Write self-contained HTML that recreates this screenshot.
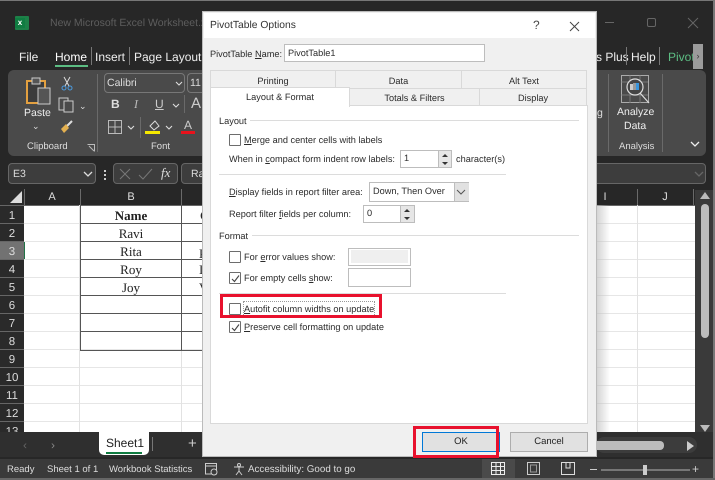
<!DOCTYPE html>
<html><head><meta charset="utf-8">
<style>
html,body{margin:0;padding:0;background:#2a2a2a;}
#p{position:relative;width:715px;height:480px;overflow:hidden;background:#272727;font-family:"Liberation Sans",sans-serif;color:#e6e6e6;font-size:11px;text-rendering:geometricPrecision;}
.a{position:absolute;white-space:nowrap;}
.t{position:absolute;white-space:nowrap;line-height:14px;}
.d{color:#2b2b2b;font-size:9.2px;}
.d u{text-decoration-thickness:1px;}
.cb{position:absolute;width:10px;height:10px;border:1px solid #6d6d6d;background:#fff;border-radius:1px;}
.inp{position:absolute;background:#fff;border:1px solid #bdbdbd;box-sizing:border-box;color:#2b2b2b;font-size:9.2px;}
.rh{position:absolute;left:0;width:24px;height:17px;background:#2a2a2a;border-bottom:1px solid #666;color:#ddd;font-size:11.5px;text-align:center;line-height:20px;overflow:hidden;}
.gh{position:absolute;left:24px;width:671px;height:1px;background:#e6e6e6;}
.gv{position:absolute;top:205px;width:1px;height:227px;background:#e2e2e2;}
.bl{position:absolute;background:#555;}
.c{position:absolute;left:80px;width:102px;text-align:center;font-family:"Liberation Serif",serif;font-size:13px;color:#222;line-height:18px;}
.ch{position:absolute;top:190px;text-align:center;color:#ddd;font-size:11px;line-height:15px;}
.sep{position:absolute;width:1px;background:#6a6a6a;}
.tab{position:absolute;box-sizing:border-box;background:#f0f0f0;border:1px solid #d9d9d9;color:#2b2b2b;font-size:9.2px;text-align:center;line-height:17px;}
.hl{position:absolute;background:#dcdcdc;height:1px;}
</style></head><body><div id="p">

<!-- outer edge -->
<div class="a" style="left:0;top:0;width:715px;height:1px;background:#777"></div>
<div class="a" style="left:713px;top:0;width:2px;height:480px;background:#777"></div>
<div class="a" style="left:0;top:478px;width:715px;height:2px;background:#666"></div>

<!-- title bar -->
<div class="a" style="left:15px;top:16px;width:14px;height:14px;background:#1d8048;border-radius:1px"></div>
<div class="a" style="left:15px;top:18px;width:10px;height:10px;background:#107c41;color:#fff;font-size:8px;font-weight:bold;text-align:center;line-height:10px">x</div>
<div class="t" style="left:50px;top:16px;font-size:10.5px;color:#5e5e5e;">New Microsoft Excel Worksheet.xl</div>
<div class="a" style="left:605px;top:22px;width:9px;height:1px;background:#666"></div>
<div class="a" style="left:647px;top:18px;width:7px;height:7px;border:1.5px solid #666;border-radius:2px"></div>
<svg class="a" style="left:687px;top:17px" width="12" height="12"><path d="M1 1L11 11M11 1L1 11" stroke="#666" stroke-width="1"/></svg>

<!-- tabs -->
<div class="t" style="left:19px;top:50px;font-size:12px;color:#eee">File</div>
<div class="t" style="left:55px;top:50px;font-size:12px;color:#fff;font-weight:500">Home</div>
<div class="a" style="left:55px;top:65px;width:33px;height:2px;background:#5cbd83"></div>
<div class="sep" style="left:91px;top:47px;height:18px;background:#777"></div>
<div class="t" style="left:95px;top:50px;font-size:12px;color:#eee">Insert</div>
<div class="sep" style="left:129px;top:47px;height:18px;background:#777"></div>
<div class="t" style="left:134px;top:50px;font-size:12px;color:#eee">Page Layout</div>
<div class="t" style="left:596px;top:50px;font-size:12px;color:#eee">s Plus</div>
<div class="sep" style="left:626px;top:47px;height:18px;background:#777"></div>
<div class="t" style="left:631px;top:50px;font-size:12px;color:#eee">Help</div>
<div class="sep" style="left:659px;top:47px;height:18px;background:#777"></div>
<div class="t" style="left:668px;top:50px;font-size:12px;color:#5cbd83;width:25px;overflow:hidden">Pivot</div>
<div class="a" style="left:693px;top:44px;width:10px;height:25px;background:#9b9b9b;color:#333;font-size:9px;text-align:center;line-height:25px">›</div>

<!-- ribbon -->
<div class="a" style="left:8px;top:70px;width:698px;height:86px;background:#4a4a4a;border-radius:6px"></div>
<svg class="a" style="left:24px;top:76px" width="30" height="32"><rect x="3" y="5" width="18" height="22" fill="#3c3c3c" stroke="#e3a040" stroke-width="2"/><rect x="8" y="2" width="8" height="6" fill="#555" stroke="#ccc"/><rect x="14" y="12" width="12" height="16" fill="#555" stroke="#ccc"/></svg>
<div class="t" style="left:24px;top:106px;font-size:10.5px;color:#eee">Paste</div>
<div class="t" style="left:32px;top:119px;font-size:9px;color:#ddd">⌄</div>
<svg class="a" style="left:60px;top:76px" width="14" height="15"><path d="M4 1L9 10M10 1L5 10" stroke="#ddd" fill="none"/><circle cx="4" cy="12" r="2" stroke="#4a9be0" fill="none"/><circle cx="10" cy="12" r="2" stroke="#4a9be0" fill="none"/></svg>
<svg class="a" style="left:58px;top:97px" width="18" height="16"><rect x="1" y="1" width="9" height="12" fill="none" stroke="#ccc"/><rect x="6" y="4" width="9" height="11" fill="#4a4a4a" stroke="#ccc"/></svg>
<div class="t" style="left:79px;top:99px;font-size:9px;color:#ddd">⌄</div>
<svg class="a" style="left:59px;top:120px" width="15" height="14"><path d="M13 1L8 6" stroke="#ddd" stroke-width="2"/><path d="M2 9L7 4L10 8L5 13Z" fill="#e3b050"/></svg>
<div class="t" style="left:27px;top:140px;font-size:9.5px;color:#ddd">Clipboard</div>
<svg class="a" style="left:87px;top:144px" width="8" height="8"><path d="M.5 .5H7.500V7.500" fill="none" stroke="#bbb"/><path d="M2 2L7 7" stroke="#bbb"/></svg>
<div class="sep" style="left:97px;top:74px;height:78px"></div>

<div class="a" style="left:104px;top:73px;width:81px;height:20px;border:1px solid #777;border-radius:4px;box-sizing:border-box;background:#4a4a4a"></div>
<div class="t" style="left:107px;top:76px;font-size:10.5px;color:#ddd">Calibri</div>
<svg class="a" style="left:175px;top:81px" width="8" height="5"><path d="M1 1L4 4L7 1" fill="none" stroke="#ddd" stroke-width="1.100"/></svg>
<div class="a" style="left:187px;top:73px;width:17px;height:20px;border:1px solid #777;border-right:0;border-radius:4px 0 0 4px;box-sizing:border-box"></div>
<div class="t" style="left:190px;top:76px;font-size:10.5px;color:#ddd">11</div>
<div class="t" style="left:111px;top:97px;font-size:12px;color:#ddd;font-weight:bold">B</div>
<div class="t" style="left:134px;top:97px;font-size:12px;color:#bbb;font-style:italic;font-family:'Liberation Serif',serif">I</div>
<div class="t" style="left:155px;top:97px;font-size:12px;color:#ccc;text-decoration:underline">U</div>
<svg class="a" style="left:172px;top:103px" width="8" height="5"><path d="M1 1L4 4L7 1" fill="none" stroke="#ddd" stroke-width="1.100"/></svg>
<div class="sep" style="left:184px;top:95px;height:18px"></div>
<div class="t" style="left:191px;top:97px;font-size:15px;color:#ccc">A</div>
<svg class="a" style="left:108px;top:120px" width="14" height="14"><path d="M.5 .5H13.500V13.500H.5ZM7 .5V13.500M.5 7H13.500" fill="none" stroke="#bbb"/></svg>
<svg class="a" style="left:127px;top:125px" width="8" height="5"><path d="M1 1L4 4L7 1" fill="none" stroke="#ddd" stroke-width="1.100"/></svg>
<div class="sep" style="left:140px;top:117px;height:21px"></div>
<svg class="a" style="left:147px;top:120px" width="14" height="11"><path d="M3 6L8 1L12 6L7 10Z" fill="none" stroke="#ddd"/></svg>
<div class="a" style="left:145px;top:131px;width:15px;height:3px;background:#f5e800"></div>
<svg class="a" style="left:165px;top:125px" width="8" height="5"><path d="M1 1L4 4L7 1" fill="none" stroke="#ddd" stroke-width="1.100"/></svg>
<div class="t" style="left:184px;top:118px;font-size:12px;color:#ccc">A</div>
<div class="a" style="left:181px;top:131px;width:14px;height:3px;background:#e8121c"></div>
<div class="t" style="left:151px;top:140px;font-size:9.5px;color:#ddd">Font</div>

<div class="sep" style="left:608px;top:74px;height:78px"></div>
<div class="t" style="left:597px;top:106px;font-size:10.500px;color:#ddd">g</div>
<div class="sep" style="left:662px;top:74px;height:78px"></div>
<svg class="a" style="left:621px;top:75px" width="30" height="30"><rect x=".5" y=".5" width="27" height="27" fill="none" stroke="#aaa"/><path d="M.5 7H27M.5 20H27M9 .5V28M19 .5V28" stroke="#777"/><circle cx="14" cy="12" r="8" fill="#444" stroke="#ddd" stroke-width="1.200"/><rect x="9" y="9" width="3" height="6" fill="#ccc"/><rect x="12" y="8" width="3" height="7" fill="#999"/><rect x="15" y="8" width="3" height="7" fill="#3a96dd"/><path d="M19 18L28 28" stroke="#ddd" stroke-width="1.200"/></svg>
<div class="t" style="left:617px;top:105px;font-size:10.500px;color:#eee">Analyze</div>
<div class="t" style="left:624px;top:119px;font-size:10.500px;color:#eee">Data</div>
<div class="t" style="left:619px;top:140px;font-size:9.500px;color:#ddd">Analysis</div>
<svg class="a" style="left:690px;top:141px" width="10" height="7"><path d="M1 1L5 5L9 1" fill="none" stroke="#eee" stroke-width="1.300"/></svg>

<!-- formula bar -->
<div class="a" style="left:8px;top:163px;width:88px;height:21px;background:#3d3d3d;border:1px solid #666;box-sizing:border-box;border-radius:4px"></div>
<div class="t" style="left:13px;top:167px;font-size:10.500px;color:#ddd">E3</div>
<svg class="a" style="left:83px;top:171px" width="10" height="7"><path d="M1 1L5 5L9 1" fill="none" stroke="#ddd" stroke-width="1.300"/></svg>
<div class="a" style="left:104px;top:170px;width:2px;height:2px;background:#ccc;box-shadow:0 4px #ccc,0 8px #ccc"></div>
<div class="a" style="left:113px;top:163px;width:65px;height:21px;background:#3d3d3d;border:1px solid #666;box-sizing:border-box;border-radius:4px"></div>
<svg class="a" style="left:119px;top:167px" width="34" height="14"><path d="M1 2L11 12M11 2L1 12" stroke="#777"/><path d="M20 8L24 12L33 2" stroke="#777" fill="none"/></svg>
<div class="t" style="left:161px;top:166px;font-size:13px;color:#ddd;font-style:italic;font-family:'Liberation Serif',serif">fx</div>
<div class="a" style="left:181px;top:163px;width:525px;height:21px;background:#3d3d3d;border:1px solid #666;box-sizing:border-box;border-radius:4px"></div>
<div class="t" style="left:191px;top:167px;font-size:10.500px;color:#ddd">Ra</div>
<svg class="a" style="left:694px;top:171px" width="10" height="7"><path d="M1 1L5 5L9 1" fill="none" stroke="#666" stroke-width="1.300"/></svg>

<!-- grid -->
<div class="a" style="left:24px;top:205px;width:671px;height:227px;background:#fff"></div>
<div class="a" style="left:0;top:190px;width:24px;height:15px;background:#2a2a2a"></div>
<svg class="a" style="left:10px;top:191px" width="13" height="13"><path d="M12 0V12H0Z" fill="#ddd"/></svg>
<div class="a" style="left:0;top:205px;width:695px;height:1px;background:#666"></div>
<div class="ch" style="left:24px;width:56px">A</div>
<div class="ch" style="left:80px;width:102px">B</div>
<div class="ch" style="left:597px;width:16px">I</div>
<div class="ch" style="left:637px;width:56px">J</div>
<div class="sep" style="left:24px;top:189px;height:16px"></div>
<div class="sep" style="left:80px;top:189px;height:16px"></div>
<div class="sep" style="left:181px;top:189px;height:16px"></div>
<div class="sep" style="left:637px;top:189px;height:16px"></div>
<div class="sep" style="left:693px;top:189px;height:16px"></div>

<div class="rh" style="top:206px">1</div>
<div class="rh" style="top:224px">2</div>
<div class="rh" style="top:242px;background:#727272">3</div>
<div class="rh" style="top:260px">4</div>
<div class="rh" style="top:278px">5</div>
<div class="rh" style="top:296px">6</div>
<div class="rh" style="top:314px">7</div>
<div class="rh" style="top:332px">8</div>
<div class="rh" style="top:350px">9</div>
<div class="rh" style="top:368px">10</div>
<div class="rh" style="top:386px">11</div>
<div class="rh" style="top:404px">12</div>
<div class="rh" style="top:422px;height:10px;border:0;line-height:20px">13</div>
<div class="a" style="left:24px;top:242px;width:1px;height:18px;background:#217346"></div>

<div class="gh" style="top:223px"></div><div class="gh" style="top:241px"></div><div class="gh" style="top:259px"></div><div class="gh" style="top:277px"></div><div class="gh" style="top:295px"></div><div class="gh" style="top:313px"></div><div class="gh" style="top:331px"></div><div class="gh" style="top:349px"></div><div class="gh" style="top:367px"></div><div class="gh" style="top:385px"></div><div class="gh" style="top:403px"></div><div class="gh" style="top:421px"></div>
<div class="gv" style="left:79px"></div><div class="gv" style="left:181px"></div><div class="gv" style="left:637px"></div>

<div class="bl" style="left:80px;top:205px;width:1px;height:146px"></div>
<div class="bl" style="left:181px;top:205px;width:1px;height:146px"></div>
<div class="bl" style="left:80px;top:223px;width:124px;height:1px"></div>
<div class="bl" style="left:80px;top:241px;width:124px;height:1px"></div>
<div class="bl" style="left:80px;top:259px;width:124px;height:1px"></div>
<div class="bl" style="left:80px;top:277px;width:124px;height:1px"></div>
<div class="bl" style="left:80px;top:295px;width:124px;height:1px"></div>
<div class="bl" style="left:80px;top:313px;width:124px;height:1px"></div>
<div class="bl" style="left:80px;top:331px;width:124px;height:1px"></div>
<div class="bl" style="left:80px;top:350px;width:124px;height:1px"></div>

<div class="c" style="top:207px;font-weight:bold">Name</div>
<div class="c" style="top:225px">Ravi</div>
<div class="c" style="top:243px">Rita</div>
<div class="c" style="top:261px">Roy</div>
<div class="c" style="top:279px">Joy</div>
<div class="t" style="left:200px;top:209px;font-family:'Liberation Serif',serif;font-size:13px;color:#222;font-weight:bold">C</div>
<div class="t" style="left:199px;top:247px;font-family:'Liberation Serif',serif;font-size:13px;color:#222">P</div>
<div class="t" style="left:199px;top:263px;font-family:'Liberation Serif',serif;font-size:13px;color:#222">I</div>
<div class="t" style="left:199px;top:281px;font-family:'Liberation Serif',serif;font-size:13px;color:#222">V</div>

<!-- dialog shadow on sheet -->
<div class="a" style="left:596px;top:205px;width:14px;height:227px;background:linear-gradient(90deg,rgba(190,190,190,.7),rgba(255,255,255,0))"></div>

<!-- vertical scrollbar -->
<div class="a" style="left:695px;top:190px;width:18px;height:243px;background:#3a3a3a"></div>
<svg class="a" style="left:700px;top:192px" width="10" height="8"><path d="M5 0L10 7H0Z" fill="#bbb"/></svg>
<div class="a" style="left:701px;top:204px;width:8px;height:134px;background:#bcbcbc;border-radius:4px"></div>
<svg class="a" style="left:700px;top:425px" width="10" height="8"><path d="M0 0H10L5 7Z" fill="#bbb"/></svg>

<!-- sheet tab bar -->
<div class="a" style="left:0;top:432px;width:713px;height:25px;background:#2f2f2f"></div>
<div class="t" style="left:23px;top:438px;font-size:12px;color:#666">‹</div>
<div class="t" style="left:51px;top:438px;font-size:12px;color:#888">›</div>
<div class="a" style="left:99px;top:432px;width:50px;height:23px;background:#fff;border-radius:0 0 5px 5px"></div>
<div class="t" style="left:106px;top:436px;font-size:12px;color:#222">Sheet1</div>
<div class="a" style="left:106px;top:452px;width:36px;height:1.500px;background:#107c41"></div>
<div class="sep" style="left:152px;top:437px;height:14px;background:#777"></div>
<div class="t" style="left:188px;top:437px;font-size:15px;color:#ccc">+</div>
<div class="a" style="left:596px;top:437px;width:101px;height:16px;background:#3c3c3c;border-radius:8px"></div>
<div class="a" style="left:596px;top:441px;width:68px;height:9px;background:#bcbcbc;border-radius:0 4px 4px 0"></div>
<svg class="a" style="left:686px;top:441px" width="9" height="10"><path d="M1 0L8 5L1 10Z" fill="#ccc"/></svg>

<!-- status bar -->
<div class="a" style="left:0;top:459px;width:713px;height:19px;background:#3a3a3a"></div>
<div class="t" style="left:7px;top:463px;font-size:9.500px;color:#ddd">Ready</div>
<div class="t" style="left:47px;top:463px;font-size:9.500px;color:#ddd">Sheet 1 of 1</div>
<div class="t" style="left:109px;top:463px;font-size:9.500px;color:#ddd">Workbook Statistics</div>
<svg class="a" style="left:205px;top:463px" width="14" height="13"><path d="M.5 .5H11.500V11H.5ZM.5 3H11.500" fill="none" stroke="#ccc"/><circle cx="9" cy="9" r="3" fill="#3a3a3a" stroke="#ccc"/></svg>
<svg class="a" style="left:233px;top:463px" width="14" height="13"><circle cx="6" cy="2" r="1.500" fill="none" stroke="#ccc"/><path d="M1 4H11M6 4V8L3 12M6 8L9 12" fill="none" stroke="#ccc"/></svg>
<div class="t" style="left:248px;top:463px;font-size:9.800px;color:#ddd">Accessibility: Good to go</div>
<div class="a" style="left:482px;top:459px;width:33px;height:19px;background:#4a4a4a"></div>
<svg class="a" style="left:491px;top:462px" width="14" height="13"><path d="M.5 .5H13.500V12.500H.5ZM.5 4.500H13.500M.5 8.500H13.500M5 .5V12.500M9.500 .5V12.500" fill="none" stroke="#eee"/></svg>
<svg class="a" style="left:527px;top:462px" width="13" height="13"><path d="M.5 .5H12.500V12.500H.5Z" fill="none" stroke="#ccc" stroke-width="1"/><rect x="3.500" y="3" width="6" height="7" fill="none" stroke="#999"/></svg>
<svg class="a" style="left:561px;top:462px" width="14" height="13"><path d="M.5 .5H13.500V12.500H.5ZM5 .5V6H9V.5" fill="none" stroke="#ddd"/></svg>
<div class="a" style="left:590px;top:469px;width:7px;height:1px;background:#ccc"></div>
<div class="a" style="left:601px;top:469px;width:89px;height:2px;background:#777"></div>
<div class="a" style="left:643px;top:465px;width:4px;height:10px;background:#ccc"></div>
<div class="t" style="left:692px;top:462px;font-size:12px;color:#ccc">+</div>

<!-- DIALOG -->
<div class="a" style="left:203px;top:12px;width:393px;height:444px;background:#f0f0f0;box-shadow:0 0 0 1px #bbb"></div>
<div class="a" style="left:204px;top:13px;width:391px;height:25px;background:#fff"></div>
<div class="t" style="left:210px;top:19px;font-size:10.300px;color:#333;">PivotTable Options</div>
<div class="t" style="left:533px;top:18px;font-size:12px;color:#444">?</div>
<svg class="a" style="left:569px;top:21px" width="11" height="11"><path d="M1 1L10 10M10 1L1 10" stroke="#444" stroke-width="1"/></svg>

<div class="t d" style="left:210px;top:47px">PivotTable <u>N</u>ame:</div>
<div class="inp" style="left:284px;top:44px;width:201px;height:18px;line-height:16px;padding-left:3px">PivotTable1</div>

<!-- upper tabs -->
<div class="tab" style="left:210px;top:70px;width:126px;height:19px;line-height:20px">Printing</div>
<div class="tab" style="left:335px;top:70px;width:127px;height:19px;line-height:20px">Data</div>
<div class="tab" style="left:461px;top:70px;width:126px;height:19px;line-height:20px">Alt Text</div>
<!-- lower tabs -->
<div class="tab" style="left:349px;top:88px;width:131px;height:18px;line-height:19px">Totals &amp; Filters</div>
<div class="tab" style="left:479px;top:88px;width:108px;height:18px;line-height:19px">Display</div>
<!-- panel -->
<div class="a" style="left:210px;top:105px;width:378px;height:319px;background:#fff;border:1px solid #d9d9d9;box-sizing:border-box"></div>
<div class="a" style="left:210px;top:87px;width:140px;height:20px;background:#fff;border:1px solid #d9d9d9;border-bottom:0;box-sizing:border-box;color:#2b2b2b;font-size:9.2px;text-align:center;line-height:18px">Layout &amp; Format</div>

<div class="t d" style="left:219px;top:114px">Layout</div>
<div class="hl" style="left:250px;top:120px;width:329px"></div>
<div class="cb" style="left:229px;top:134px"></div>
<div class="t d" style="left:244px;top:133px"><u>M</u>erge and center cells with labels</div>
<div class="t d" style="left:229px;top:152px">When in <u>c</u>ompact form indent row labels:</div>
<div class="inp" style="left:400px;top:150px;width:52px;height:18px;line-height:15px;padding-left:3px">1</div>
<div class="a" style="left:438px;top:150px;width:14px;height:18px;background:#e6e6e6;border:1px solid #bdbdbd;box-sizing:border-box"></div>
<svg class="a" style="left:441px;top:153px" width="8" height="13"><path d="M4 1L7 4H1Z" fill="#333"/><path d="M1 9H7L4 12Z" fill="#333"/></svg>
<div class="t d" style="left:456px;top:152px">character(s)</div>
<div class="hl" style="left:219px;top:174px;width:287px"></div>

<div class="t d" style="left:229px;top:185px"><u>D</u>isplay fields in report filter area:</div>
<div class="inp" style="left:369px;top:182px;width:100px;height:20px;line-height:17px;padding-left:3px">Down, Then Over</div>
<div class="a" style="left:454px;top:183px;width:14px;height:18px;background:#e1e1e1;border-left:1px solid #bdbdbd"></div>
<svg class="a" style="left:456px;top:189px" width="10" height="6"><path d="M1 1L5 5L9 1" fill="none" stroke="#555"/></svg>
<div class="t d" style="left:229px;top:207px">Report filter <u>f</u>ields per column:</div>
<div class="inp" style="left:363px;top:205px;width:52px;height:18px;line-height:15px;padding-left:3px">0</div>
<div class="a" style="left:400px;top:205px;width:15px;height:18px;background:#e6e6e6;border:1px solid #bdbdbd;box-sizing:border-box"></div>
<svg class="a" style="left:403px;top:208px" width="8" height="13"><path d="M4 1L7 4H1Z" fill="#333"/><path d="M1 9H7L4 12Z" fill="#333"/></svg>

<div class="t d" style="left:219px;top:229px">Format</div>
<div class="hl" style="left:252px;top:235px;width:327px"></div>
<div class="cb" style="left:229px;top:251px"></div>
<div class="t d" style="left:244px;top:250px">For <u>e</u>rror values show:</div>
<div class="inp" style="left:348px;top:248px;width:63px;height:18px;background:#fff"></div>
<div class="a" style="left:351px;top:250px;width:57px;height:13px;background:#efefef"></div>
<div class="cb" style="left:229px;top:272px"></div>
<svg class="a" style="left:231px;top:274px" width="9" height="9"><path d="M1 5L3.500 7.500L8 1.500" fill="none" stroke="#444" stroke-width="1.100"/></svg>
<div class="t d" style="left:244px;top:271px">For empty cells <u>s</u>how:</div>
<div class="inp" style="left:348px;top:268px;width:63px;height:19px"></div>
<div class="hl" style="left:219px;top:293px;width:287px"></div>

<div class="cb" style="left:229px;top:303px"></div>
<div class="t d" style="left:244px;top:302px;outline:1px dotted #999;outline-offset:0"><u>A</u>utofit column widths on update</div>
<div class="a" style="left:220px;top:294px;width:162px;height:24px;border:3px solid #e8112d;box-sizing:border-box"></div>
<div class="cb" style="left:229px;top:321px"></div>
<svg class="a" style="left:231px;top:323px" width="9" height="9"><path d="M1 5L3.500 7.500L8 1.500" fill="none" stroke="#444" stroke-width="1.100"/></svg>
<div class="t d" style="left:244px;top:320px"><u>P</u>reserve cell formatting on update</div>

<!-- buttons -->
<div class="a" style="left:422px;top:432px;width:78px;height:20px;background:#e1e1e1;border:1.500px solid #0078d7;box-sizing:border-box;color:#222;font-size:9.500px;text-align:center;line-height:18px">OK</div>
<div class="a" style="left:413px;top:426px;width:86px;height:32px;border:3px solid #e8112d;box-sizing:border-box"></div>
<div class="a" style="left:510px;top:432px;width:78px;height:20px;background:#e1e1e1;border:1px solid #adadad;box-sizing:border-box;color:#222;font-size:9.500px;text-align:center;line-height:18px">Cancel</div>

</div></body></html>
